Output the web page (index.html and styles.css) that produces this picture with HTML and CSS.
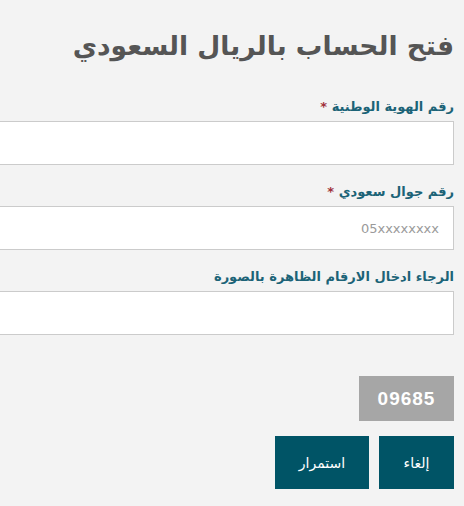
FILE: index.html
```html
<!DOCTYPE html>
<html lang="ar" dir="rtl">
<head>
  <meta charset="UTF-8" />
  <title>فتح الحساب بالريال السعودي</title>
  <link rel="stylesheet" href="styles.css">
</head>
<body>
  <main class="form-wrap">
    <h1 class="title">فتح الحساب بالريال السعودي</h1>

    <div class="field">
      <label class="label">رقم الهوية الوطنية <span class="req">*</span></label>
      <input class="input" type="text">
    </div>

    <div class="field">
      <label class="label">رقم جوال سعودي <span class="req">*</span></label>
      <input class="input" type="text" placeholder="05xxxxxxxx">
    </div>

    <div class="field">
      <label class="label">الرجاء ادخال الارقام الظاهرة بالصورة</label>
      <input class="input" type="text">
    </div>

    <div class="captcha">09685</div>

    <div class="actions">
      <button class="btn">إلغاء</button>
      <button class="btn btn-wide">استمرار</button>
    </div>
  </main>
</body>
</html>
```

FILE: styles.css
```css
/* base */
* { box-sizing: border-box; margin: 0; padding: 0; }
html, body { height: 100%; overflow: hidden; }
body {
  background: #f3f3f3;
  font-family: "DejaVu Sans", "Noto Sans", sans-serif;
  color: #555;
}

/* form column, right aligned, runs off the left edge */
.form-wrap {
  width: 640px;
  margin-right: 10px;
  margin-left: auto;
  display: flex;
  flex-direction: column;
}

.title {
  font-size: 26.5px;
  font-weight: bold;
  color: #555;
  line-height: 40px;
  margin-top: 26px;
  margin-bottom: 32px;
}

.field { margin-bottom: 18px; }

.label {
  display: block;
  font-size: 13px;
  font-weight: bold;
  color: #1c6377;
  line-height: 18px;
  margin-bottom: 5px;
}
.req { color: #a0303a; }

.input {
  display: block;
  width: 100%;
  height: 44px;
  background: #fff;
  border: 1px solid #cbcbcb;
  padding: 0 14px;
  font-family: inherit;
  font-size: 13px;
  color: #555;
}
.input::placeholder { color: #9a9a9a; }

/* captcha image */
.captcha {
  align-self: flex-start;
  width: 95px;
  height: 45px;
  margin-top: 23px;
  background: #a6a6a6;
  color: #fff;
  font-family: "Liberation Sans", sans-serif;
  font-weight: bold;
  font-size: 19px;
  letter-spacing: 1px;
  display: flex;
  align-items: center;
  justify-content: center;
}

.actions {
  display: flex;
  gap: 10px;
  margin-top: 15px;
}
.btn {
  width: 75px;
  height: 53px;
  background: #005466;
  color: #fff;
  border: none;
  font-family: inherit;
  font-size: 14px;
  cursor: pointer;
}
.btn-wide { width: 94px; }
```
